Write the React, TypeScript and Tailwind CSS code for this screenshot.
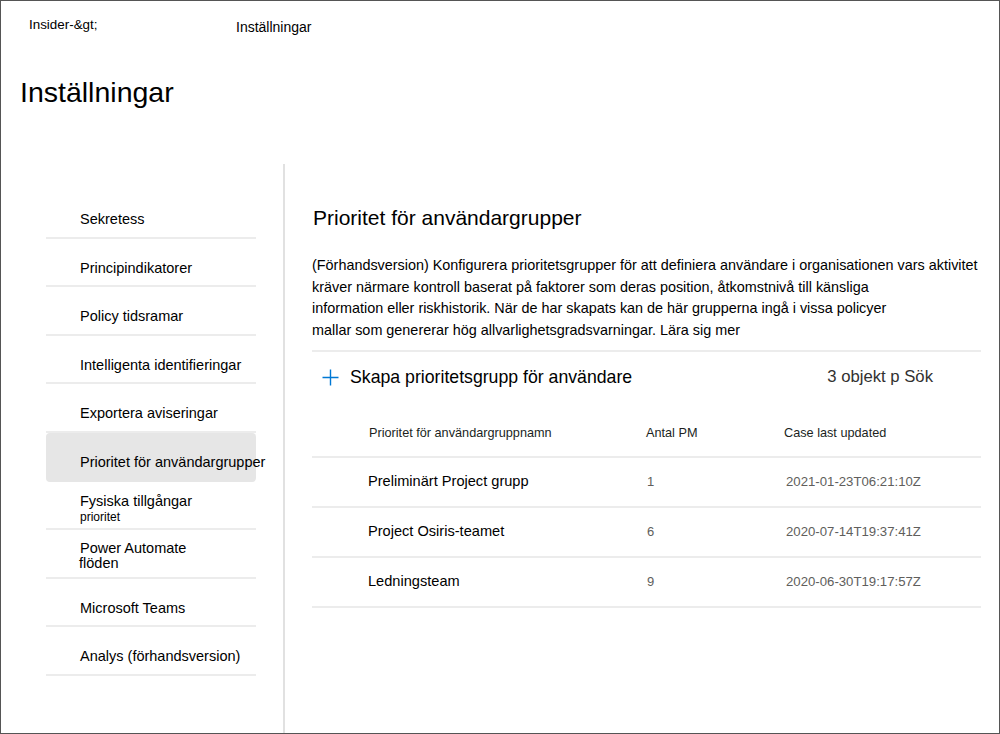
const navItems = [
  { label: 'Sekretess' },
  { label: 'Principindikatorer' },
  { label: 'Policy tidsramar' },
  { label: 'Intelligenta identifieringar' },
  { label: 'Exportera aviseringar' },
  { label: 'Prioritet för användargrupper', active: true },
  { label: 'Fysiska tillgångar', sub: 'prioritet' },
  { label: 'Power Automate', second: 'flöden' },
  { label: 'Microsoft Teams' },
  { label: 'Analys (förhandsversion)' },
];

const groups = [
  { name: 'Preliminärt Project grupp', count: 1, updated: '2021-01-23T06:21:10Z' },
  { name: 'Project Osiris-teamet', count: 6, updated: '2020-07-14T19:37:41Z' },
  { name: 'Ledningsteam', count: 9, updated: '2020-06-30T19:17:57Z' },
];

function PlusIcon() {
  return (
    <svg width="17" height="17" viewBox="0 0 17 17" fill="none">
      <path d="M8.5 0.5v16M0.5 8.5h16" stroke="#0078d4" strokeWidth="1.4" />
    </svg>
  );
}

function NavItem({ item }: { item: (typeof navItems)[number] }) {
  if (item.sub) {
    return (
      <div className="h-[48.6px] border-b-2 border-[#ececec] pl-[34px] pt-[10px]">
        <div className="text-[14.5px] leading-[18px]">{item.label}</div>
        <div className="text-[12px] leading-[14px]">{item.sub}</div>
      </div>
    );
  }
  if (item.second) {
    return (
      <div className="h-[48.6px] border-b-2 border-[#ececec] pl-[34px] pt-[11px] text-[14.5px] leading-[15px]">
        <div>{item.label}</div>
        <div className="-ml-px">{item.second}</div>
      </div>
    );
  }
  return (
    <div
      className={
        item.active
          ? 'h-[48.6px] rounded-sm bg-[#e6e6e6] pl-[34px] pt-[19px] text-[14.5px] leading-[20px] whitespace-nowrap'
          : 'h-[48.6px] border-b-2 border-[#ececec] pl-[34px] pt-[19px] text-[14.5px] leading-[20px]'
      }
    >
      {item.label}
    </div>
  );
}

export default function App() {
  return (
    <div className="flex h-[734px] w-[1000px] flex-col border border-[#555] bg-white font-['Liberation_Sans',Arial,sans-serif] text-black">
      {/* breadcrumb */}
      <div className="flex h-[40px] items-start pl-[28px]">
        <span className="mt-[16px] w-[207px] text-[13.4px] leading-[16px]">Insider-&amp;gt;</span>
        <span className="mt-[17px] text-[14px] leading-[18px]">Inställningar</span>
      </div>

      <h1 className="mt-[34px] pl-[19px] text-[28.5px] leading-[34px] font-normal">Inställningar</h1>

      <div className="mt-[55px] flex flex-1">
        {/* left nav */}
        <div className="w-[282px] shrink-0 pl-[45px] pt-[26px]">
          <div className="w-[210px]">
            {navItems.map((item) => (
              <NavItem key={item.label} item={item} />
            ))}
          </div>
        </div>

        <div className="w-[2px] shrink-0 bg-[#e1e1e1]" />

        {/* content */}
        <div className="min-w-0 flex-1 pl-[27px] pr-[18px] pt-[40px]">
          <h2 className="pl-px text-[21px] leading-[28px] font-normal">Prioritet för användargrupper</h2>

          <div className="mt-[23px] text-[14.4px] leading-[21.5px]">
            <div className="whitespace-nowrap">
              (Förhandsversion) Konfigurera prioritetsgrupper för att definiera användare i organisationen vars aktivitet
            </div>
            <div className="whitespace-nowrap">
              kräver närmare kontroll baserat på faktorer som deras position, åtkomstnivå till känsliga
            </div>
            <div className="whitespace-nowrap">
              information eller riskhistorik. När de har skapats kan de här grupperna ingå i vissa policyer
            </div>
            <div className="whitespace-nowrap">
              mallar som genererar hög allvarlighetsgradsvarningar. Lära sig mer
            </div>
          </div>

          <div className="mt-[9px] h-[2px] bg-[#ececec]" />

          {/* actions */}
          <div className="flex h-[50px] items-center pl-[10px] pr-[48px]">
            <PlusIcon />
            <span className="ml-[11px] text-[17.7px]">Skapa prioritetsgrupp för användare</span>
            <span className="ml-auto text-[16.7px] text-[#323130]">3 objekt p Sök</span>
          </div>

          {/* table */}
          <div className="mt-[10px]">
            <div className="grid h-[46px] grid-cols-[334px_138px_1fr] items-center border-b-2 border-[#ececec] text-[12.7px] text-[#201f1e]">
              <span className="pl-[57px]">Prioritet för användargruppnamn</span>
              <span>Antal PM</span>
              <span>Case last updated</span>
            </div>
            {groups.map((g) => (
              <div
                key={g.name}
                className="grid h-[50px] grid-cols-[334px_138px_1fr] items-center border-b-2 border-[#ececec]"
              >
                <span className="pl-[56px] text-[14.6px]">{g.name}</span>
                <span className="pl-px text-[13px] text-[#605e5c]">{g.count}</span>
                <span className="pl-[2px] text-[13.2px] text-[#605e5c]">{g.updated}</span>
              </div>
            ))}
          </div>
        </div>
      </div>
    </div>
  );
}
